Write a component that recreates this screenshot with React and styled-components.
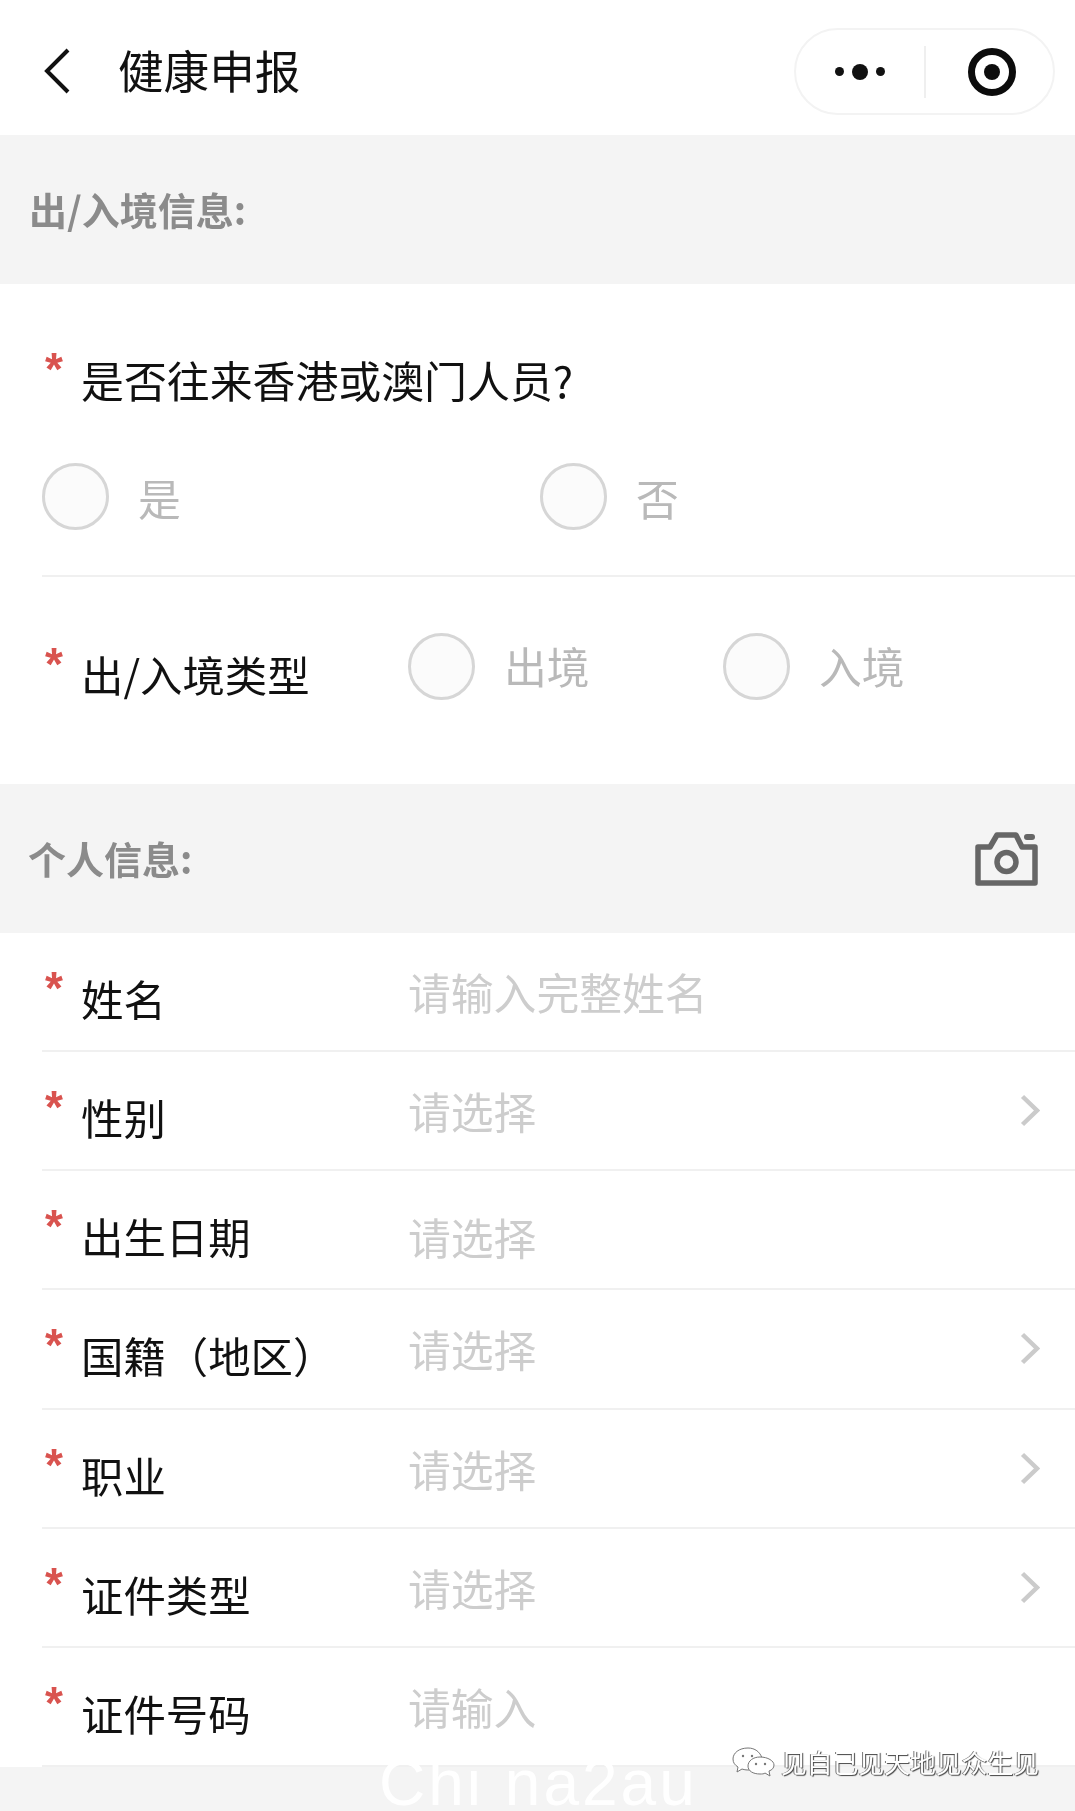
import styled, { createGlobalStyle } from 'styled-components';

const GlobalStyle = createGlobalStyle`
  html, body {
    margin: 0;
    padding: 0;
    background: #fff;
  }

  body {
    font-family: "Noto Sans CJK SC", "Liberation Sans", sans-serif;
  }
`;

const fields = [
  { label: '姓名', hint: '请输入完整姓名' },
  { label: '性别', hint: '请选择', arrow: true },
  { label: '出生日期', hint: '请选择', low: true },
  { label: '国籍（地区）', hint: '请选择', arrow: true },
  { label: '职业', hint: '请选择', arrow: true },
  { label: '证件类型', hint: '请选择', arrow: true },
  { label: '证件号码', hint: '请输入' }
];

function Chevron() {
  return (
    <svg width="20" height="33" viewBox="0 0 20 33" fill="none">
      <path d="M2.5 2.5 L17 16.5 L2.5 30.5" stroke="#cbcbcb" strokeWidth="4.5" />
    </svg>
  );
}

function Camera() {
  return (
    <svg width="63" height="54" viewBox="0 0 63 54" fill="none">
      <path
        d="M3 15 H15 L22 3 H41 L47 15 H60 V51 H3 Z"
        stroke="#666"
        strokeWidth="5.5"
        strokeLinejoin="round"
      />
      <circle cx="31.5" cy="30" r="9.5" stroke="#666" strokeWidth="5.5" />
      <rect x="49" y="2" width="11" height="6" rx="3" fill="#666" />
    </svg>
  );
}

function WeChatMark() {
  return (
    <svg width="44" height="30" viewBox="0 0 44 30" fill="#fff" stroke="#777" strokeWidth="1">
      <path d="M16 1 C7 1 1 6 1 12 C1 16 3 18 6 20 L5 25 L10 22 C13 23 15 23 18 23 C24 20 30 16 30 11 C28 5 23 1 16 1 Z" />
      <path d="M28 10 C21 10 16 14 16 19 C16 24 21 27 28 27 C30 27 32 27 33 26 L38 29 L37 24 C40 23 42 21 42 18 C42 14 36 10 28 10 Z" />
      <circle cx="11" cy="9" r="1.2" fill="#777" stroke="none" />
      <circle cx="20" cy="9" r="1.2" fill="#777" stroke="none" />
      <circle cx="24" cy="17" r="1.2" fill="#777" stroke="none" />
      <circle cx="33" cy="17" r="1.2" fill="#777" stroke="none" />
    </svg>
  );
}

export default function App() {
  return (
    <Page>
      <GlobalStyle />
      <TopBar>
        <BackButton>
          <svg width="30" height="48" viewBox="0 0 30 48" fill="none">
            <path d="M26 3 L5 24 L26 45" stroke="#111" strokeWidth="4" />
          </svg>
        </BackButton>
        <PageTitle>健康申报</PageTitle>
        <Capsule>
          <MoreButton>
            <Dot $size={9} />
            <Dot $size={16} />
            <Dot $size={9} />
          </MoreButton>
          <CloseButton>
            <CloseDot />
          </CloseButton>
        </Capsule>
      </TopBar>

      <SectionBar>
        <SectionTitle>出/入境信息:</SectionTitle>
      </SectionBar>

      <QuestionBlock>
        <LabelLine>
          <Star>*</Star>
          <LabelText $size={42.9}>是否往来香港或澳门人员?</LabelText>
        </LabelLine>
        <ChoiceRow $top={54}>
          <Choice $width={498}>
            <Radio />
            <ChoiceText $shift={0}>是</ChoiceText>
          </Choice>
          <Choice>
            <Radio />
            <ChoiceText $shift={0}>否</ChoiceText>
          </Choice>
        </ChoiceRow>
      </QuestionBlock>

      <TypeRow>
        <FieldLabel $top={67}>
          <Star>*</Star>
          <LabelText>出/入境类型</LabelText>
        </FieldLabel>
        <ChoiceRow $top={56}>
          <Choice $width={315}>
            <Radio />
            <ChoiceText $shift={-3}>出境</ChoiceText>
          </Choice>
          <Choice>
            <Radio />
            <ChoiceText $shift={-3}>入境</ChoiceText>
          </Choice>
        </ChoiceRow>
      </TypeRow>

      <SectionBar $indent={28}>
        <SectionTitle>个人信息:</SectionTitle>
        <CameraSlot>
          <Camera />
        </CameraSlot>
      </SectionBar>

      {fields.map((field) => (
        <FieldRow key={field.label}>
          <FieldLabel $top={35}>
            <Star>*</Star>
            <LabelText>{field.label}</LabelText>
          </FieldLabel>
          <Hint $low={field.low}>{field.hint}</Hint>
          {field.arrow ? (
            <ArrowSlot>
              <Chevron />
            </ArrowSlot>
          ) : null}
        </FieldRow>
      ))}

      <BottomBar />

      <SiteMark>Chi na2au</SiteMark>
      <AccountMark>
        <WeChatMark />
        <AccountName>见自己见天地见众生见</AccountName>
      </AccountMark>
    </Page>
  );
}

const Page = styled.div`
  position: relative;
  width: 1075px;
  height: 1811px;
  overflow: hidden;
  background: #fff;
  filter: blur(0.5px);
`;

const TopBar = styled.header`
  display: flex;
  align-items: center;
  height: 135px;
  padding: 0 20px 0 42px;
  box-sizing: border-box;
`;

const BackButton = styled.div`
  display: flex;
  width: 76px;
  margin-top: 6px;
`;

const PageTitle = styled.h1`
  margin: 2px 0 0;
  font-size: 45.6px;
  line-height: 60px;
  font-weight: 400;
  color: #111;
`;

const Capsule = styled.div`
  display: flex;
  align-items: center;
  width: 261px;
  height: 87px;
  margin: 8px 0 0 auto;
  box-sizing: border-box;
  border: 2px solid #f3f3f3;
  border-radius: 44px;
`;

const MoreButton = styled.div`
  display: flex;
  align-items: center;
  justify-content: center;
  gap: 8px;
  width: 128px;
  height: 52px;
  border-right: 2px solid #efefef;
`;

const Dot = styled.span`
  width: ${({ $size }) => $size}px;
  height: ${({ $size }) => $size}px;
  border-radius: 50%;
  background: #111;
`;

const CloseButton = styled.div`
  display: flex;
  align-items: center;
  justify-content: center;
  width: 48px;
  height: 48px;
  margin-left: 42px;
  box-sizing: border-box;
  border: 7px solid #0c0c0c;
  border-radius: 50%;
`;

const CloseDot = styled.span`
  width: 16px;
  height: 16px;
  border-radius: 50%;
  background: #0c0c0c;
`;

const SectionBar = styled.div`
  display: flex;
  align-items: center;
  height: 149px;
  padding-left: ${({ $indent }) => $indent || 29}px;
  box-sizing: border-box;
  background: #f4f4f4;
`;

const SectionTitle = styled.h2`
  margin: -2px 0 0;
  font-size: 38px;
  line-height: 50px;
  font-weight: 700;
  color: #8b8b8b;
`;

const CameraSlot = styled.div`
  display: flex;
  margin-left: auto;
  margin-right: 37px;
`;

const QuestionBlock = styled.section`
  height: 293px;
  margin-left: 42px;
  padding-top: 65px;
  box-sizing: border-box;
  border-bottom: 2px solid #f0f0f0;
`;

const LabelLine = styled.div`
  display: flex;
  align-items: flex-start;
`;

const Star = styled.span`
  width: 39px;
  height: 30px;
  margin-top: -5px;
  padding-left: 3px;
  box-sizing: border-box;
  font-family: "Liberation Sans", sans-serif;
  font-size: 46px;
  line-height: 50px;
  font-weight: 700;
  color: #d9534f;
`;

const LabelText = styled.span`
  font-size: ${({ $size }) => $size || 42.4}px;
  line-height: 60px;
  color: #111;
  white-space: nowrap;
`;

const ChoiceRow = styled.div`
  display: flex;
  margin-top: ${({ $top }) => $top}px;
`;

const Choice = styled.div`
  display: flex;
  align-items: center;
  width: ${({ $width }) => ($width ? `${$width}px` : 'auto')};
`;

const Radio = styled.span`
  width: 67px;
  height: 67px;
  box-sizing: border-box;
  border: 3px solid #d6d6d6;
  border-radius: 50%;
  background: #fbfbfb;
`;

const ChoiceText = styled.span`
  margin-left: 29px;
  margin-top: ${({ $shift }) => $shift}px;
  font-size: 42.8px;
  line-height: 60px;
  color: #b9b9b9;
`;

const TypeRow = styled.section`
  display: flex;
  align-items: flex-start;
  height: 207px;
  margin-left: 42px;
  box-sizing: border-box;
`;

const FieldLabel = styled.div`
  display: flex;
  align-items: flex-start;
  flex: none;
  width: 366px;
  padding-top: ${({ $top }) => $top}px;
  box-sizing: border-box;
`;

const FieldRow = styled.div`
  display: flex;
  align-items: flex-start;
  height: 119.15px;
  margin-left: 42px;
  box-sizing: border-box;
  border-bottom: 2px solid #f0f0f0;
`;

const Hint = styled.span`
  margin-top: ${({ $low }) => ($low ? '35px' : '28px')};
  font-size: 42.8px;
  line-height: 60px;
  color: #cdcdcd;
`;

const ArrowSlot = styled.div`
  display: flex;
  align-self: center;
  margin-left: auto;
  margin-right: 35px;
`;

const BottomBar = styled.div`
  height: 46px;
  background: #f4f4f4;
`;

const SiteMark = styled.div`
  position: absolute;
  left: 379px;
  top: 1755px;
  font-family: "Liberation Sans", sans-serif;
  font-size: 64px;
  line-height: 56px;
  letter-spacing: 3px;
  color: #fff;
  white-space: nowrap;
`;

const AccountMark = styled.div`
  position: absolute;
  left: 732px;
  top: 1746px;
  display: flex;
  align-items: center;
  gap: 5px;
`;

const AccountName = styled.span`
  font-size: 25.8px;
  line-height: 32px;
  color: #fff;
  text-shadow: 1px 1px 1px #444, -1px 0 0 #777;
  white-space: nowrap;
`;
